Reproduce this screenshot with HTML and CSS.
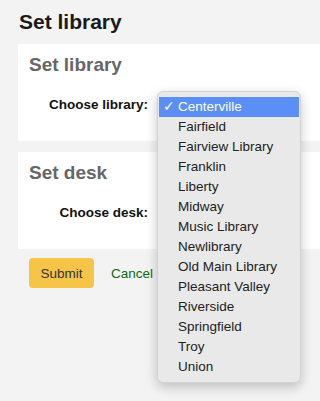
FILE: index.html
```html
<!DOCTYPE html>
<html lang="en">
  <head>
    <meta charset="UTF-8" />
    <meta name="viewport" content="width=device-width, initial-scale=1.0" />
    <title>Set library</title>
    <link rel="stylesheet" href="styles.css">
  </head>
  <body>
    <div class="main">
      <h1>Set library</h1>
      <form class="set-form">
        <fieldset class="panel">
          <h2>Set library</h2>
          <div class="form-row">
            <label for="branch">Choose library:</label>
            <div class="field" id="branch"></div>
          </div>
        </fieldset>

        <fieldset class="panel">
          <h2>Set desk</h2>
          <div class="form-row">
            <label for="desk">Choose desk:</label>
            <div class="field" id="desk"></div>
          </div>
        </fieldset>

        <div class="actions">
          <button type="button" class="button submit-button">Submit</button>
          <a class="cancel" href="#">Cancel</a>
        </div>
      </form>
    </div>

    <!-- open select menu -->
    <ul class="select-menu">
      <li class="selected"><span class="check">&#10003;</span>Centerville</li>
      <li>Fairfield</li>
      <li>Fairview Library</li>
      <li>Franklin</li>
      <li>Liberty</li>
      <li>Midway</li>
      <li>Music Library</li>
      <li>Newlibrary</li>
      <li>Old Main Library</li>
      <li>Pleasant Valley</li>
      <li>Riverside</li>
      <li>Springfield</li>
      <li>Troy</li>
      <li>Union</li>
    </ul>
  </body>
</html>
```

FILE: styles.css
```css
body {
  margin: 0;
  background-color: #f3f3f3;
  font-family: "Liberation Sans", Arial, sans-serif;
  color: #111;
  overflow: hidden;
}

.main {
  padding: 10px 0 0 18px;
}

h1 {
  margin: 0 0 10px 1px;
  font-size: 21px;
  line-height: 24px;
  font-weight: bold;
  color: #1a1a1a;
}

.panel {
  margin: 0 0 11px 0;
  padding: 10px 0 26px 11px;
  border: none;
  background-color: #fff;
}

.panel h2 {
  margin: 0;
  font-size: 19px;
  line-height: 22px;
  font-weight: bold;
  color: #666;
}

.form-row {
  display: flex;
  align-items: center;
  margin-top: 19px;
  line-height: 20px;
}

.form-row label {
  width: 119px;
  text-align: right;
  font-size: 13.5px;
  font-weight: bold;
  color: #111;
}

.field {
  width: 130px;
  height: 20px;
  margin-left: 10px;
}

.actions {
  display: flex;
  align-items: center;
  margin-top: -2px;
  padding-left: 11px;
}

.button {
  width: 65px;
  height: 30px;
  border: none;
  border-radius: 4px;
  font-family: inherit;
  font-size: 13.5px;
  color: #333;
  cursor: pointer;
}

.submit-button {
  background-color: #f6c446;
}

.cancel {
  margin-left: 17px;
  font-size: 13.5px;
  color: #0b6b0b;
  text-decoration: none;
}

.select-menu {
  position: absolute;
  left: 157px;
  top: 91px;
  width: 140px;
  margin: 0;
  padding: 5px 1px;
  list-style: none;
  background-color: #e9e9e9;
  border: 1px solid #d2d2d2;
  border-radius: 6px;
  box-shadow: 0 4px 12px rgba(0, 0, 0, 0.22);
}

.select-menu li {
  position: relative;
  height: 20px;
  padding-left: 19px;
  font-size: 13.5px;
  line-height: 20px;
  color: #222;
}

.select-menu li.selected {
  background-color: #5b8ff5;
  color: #fff;
}

.check {
  position: absolute;
  left: 4px;
  top: 0;
}
```
